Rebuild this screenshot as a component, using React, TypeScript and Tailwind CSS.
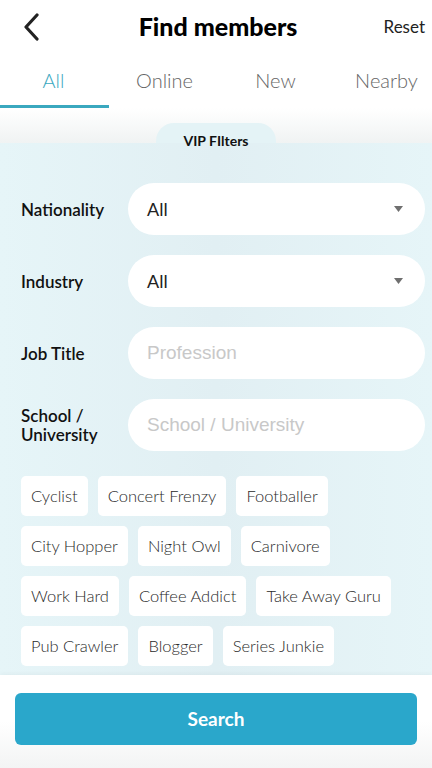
import React, { useState } from "react";

const tabs = ["All", "Online", "New", "Nearby"];

const chipRows = [
  ["Cyclist", "Concert Frenzy", "Footballer"],
  ["City Hopper", "Night Owl", "Carnivore"],
  ["Work Hard", "Coffee Addict", "Take Away Guru"],
  ["Pub Crawler", "Blogger", "Series Junkie"],
];

function Caret() {
  return (
    <svg width="9" height="6" viewBox="0 0 9 6" className="shrink-0">
      <path d="M0 0 H9 L4.5 6 Z" fill="#6f6f6f" />
    </svg>
  );
}

function SelectRow({ label, value }: { label: string; value: string }) {
  return (
    <div className="flex items-center h-[52px]">
      <div className="w-[107px] text-[17px] font-semibold text-[#111] leading-[19px]">{label}</div>
      <div className="flex-1 h-full bg-white rounded-full flex items-center justify-between pl-[19px] pr-[22px]">
        <span className="text-[18px] text-[#222]">{value}</span>
        <Caret />
      </div>
    </div>
  );
}

function InputRow({ label, placeholder }: { label: React.ReactNode; placeholder: string }) {
  return (
    <div className="flex items-center h-[52px]">
      <div className="w-[107px] text-[17px] font-semibold text-[#111] leading-[19px]">{label}</div>
      <input
        placeholder={placeholder}
        className="flex-1 h-full bg-white rounded-full pl-[19px] pr-4 text-[19px] outline-none placeholder:text-[#c8c8c8] font-['Liberation_Sans',sans-serif]"
      />
    </div>
  );
}

export default function App() {
  const [active, setActive] = useState(0);

  return (
    <div className="w-[432px] h-[768px] flex flex-col bg-white font-['Lato',sans-serif] overflow-hidden">
      {/* header */}
      <div className="h-[54px] grid grid-cols-[1fr_auto_1fr] items-center px-[20px] shrink-0">
        <svg width="18" height="28" viewBox="0 0 18 28" className="ml-[2px]">
          <path d="M15 2 L4 14 L15 26" fill="none" stroke="#222" strokeWidth="3.2" strokeLinecap="round" strokeLinejoin="round" />
        </svg>
        <h1 className="text-[25px] font-black text-black ml-[4px]">Find members</h1>
        <button className="justify-self-end text-[17px] text-[#222] -mr-[13px]">Reset</button>
      </div>

      {/* tabs */}
      <div className="h-[54px] flex shrink-0 -ml-[2px]">
        {tabs.map((t, i) => (
          <button
            key={t}
            onClick={() => setActive(i)}
            className={`w-[111px] shrink-0 flex items-center justify-center text-[20px] font-light border-b-[3px] ${
              active === i ? "text-[#3aa8bf] border-[#3aa8bf]" : "text-[#666] border-transparent"
            }`}
          >
            {t}
          </button>
        ))}
      </div>

      {/* VIP pill */}
      <div className="h-[35px] bg-gradient-to-b from-white to-[#f0f3f3] flex justify-center items-end shrink-0">
        <div className="w-[120px] h-[20px] bg-[#e4f3f6] rounded-t-[18px] flex justify-center pt-[11px] relative z-10">
          <span className="text-[14px] font-bold text-[#111] leading-none h-[14px]">VIP FIlters</span>
        </div>
      </div>

      {/* panel */}
      <div className="flex-1 bg-gradient-to-r from-[#e6f5f8] via-[#e1eff3] to-[#e6f5f8] pl-[21px] pr-[7px] pt-[40px]">
        <div className="flex flex-col gap-[20px]">
          <SelectRow label="Nationality" value="All" />
          <SelectRow label="Industry" value="All" />
          <InputRow label="Job Title" placeholder="Profession" />
          <InputRow
            label={
              <>
                School /<br />University
              </>
            }
            placeholder="School / University"
          />
        </div>

        <div className="mt-[25px] flex flex-col gap-[10px]">
          {chipRows.map((row, r) => (
            <div key={r} className="flex gap-[10px]">
              {row.map((c) => (
                <span
                  key={c}
                  className="h-[40px] px-[10px] bg-white rounded-[5px] flex items-center text-[16.5px] font-light text-[#2a2a2a]"
                >
                  {c}
                </span>
              ))}
            </div>
          ))}
        </div>
      </div>

      {/* bottom */}
      <div className="h-[93px] bg-gradient-to-b from-white via-white to-[#f3f4f4] shadow-[0_-2px_4px_rgba(0,0,0,0.03)] shrink-0 px-[15px] pt-[18px]">
        <button className="w-full h-[52px] bg-[#2aa7cb] rounded-[6px] text-white text-[19px] font-bold">
          Search
        </button>
      </div>
    </div>
  );
}
